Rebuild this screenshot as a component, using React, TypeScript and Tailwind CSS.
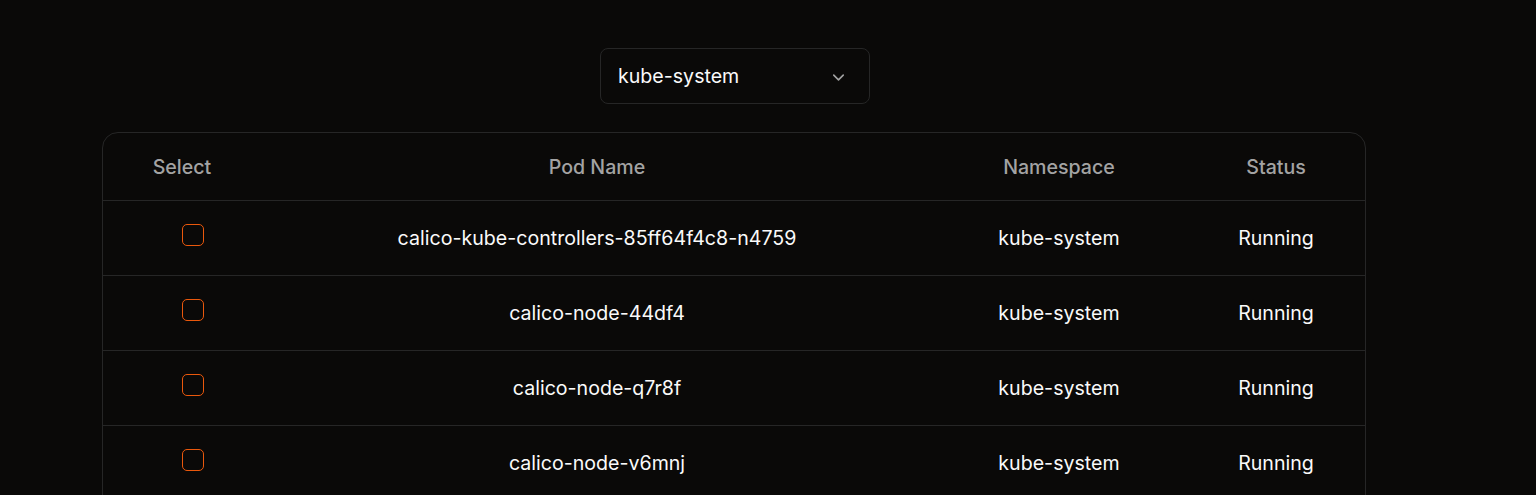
import React, { useState } from 'react';
import { ChevronDown } from 'lucide-react';

interface Pod {
    name: string;
    namespace: string;
    status: string;
}

const pods: Pod[] = [
    { name: 'calico-kube-controllers-85ff64f4c8-n4759', namespace: 'kube-system', status: 'Running' },
    { name: 'calico-node-44df4', namespace: 'kube-system', status: 'Running' },
    { name: 'calico-node-q7r8f', namespace: 'kube-system', status: 'Running' },
    { name: 'calico-node-v6mnj', namespace: 'kube-system', status: 'Running' },
    { name: 'coredns-7db6d8ff4d-8xk2p', namespace: 'kube-system', status: 'Running' },
];

const App: React.FC = () => {
    const [selected, setSelected] = useState<string[]>([]);

    const toggle = (name: string) => {
        setSelected((prev) => (prev.includes(name) ? prev.filter((n) => n !== name) : [...prev, name]));
    };

    return (
        <div className="min-h-screen bg-[#0a0908] font-['Inter',sans-serif] text-[#fafafa]">
            <div className="mr-[68px] flex flex-col items-center pt-12">
                <button className="ml-[2px] flex h-14 w-[270px] items-center justify-between rounded-lg border border-[#262626] bg-[#0a0908] pl-[17px] pr-[21px] pt-[2px] text-[19.6px]">
                    <span>kube-system</span>
                    <ChevronDown className="h-[19px] w-[19px] text-[#a3a3a3]" strokeWidth={2} />
                </button>
                <div className="mt-7 w-[1264px] overflow-hidden rounded-2xl border border-[#262626]">
                    <table className="w-full table-fixed border-collapse text-[19.6px]">
                        <colgroup>
                            <col className="w-[158px]" />
                            <col className="w-[672px]" />
                            <col className="w-[252px]" />
                            <col className="w-[182px]" />
                        </colgroup>
                        <thead>
                            <tr className="h-[67px] border-b border-[#262626] text-[#a3a3a3]">
                                <th className="pt-[2px] font-medium">Select</th>
                                <th className="pt-[2px] font-medium">Pod Name</th>
                                <th className="pt-[2px] font-medium">Namespace</th>
                                <th className="pt-[2px] font-medium">Status</th>
                            </tr>
                        </thead>
                        <tbody>
                            {pods.map((pod) => (
                                <tr key={pod.name} className="h-[75px] border-b border-[#262626]">
                                    <td className="pl-[21px] text-center">
                                        <div className="flex justify-center pb-[6px]">
                                            <input
                                                type="checkbox"
                                                checked={selected.includes(pod.name)}
                                                onChange={() => toggle(pod.name)}
                                                className="h-[22px] w-[22px] appearance-none rounded-[5px] border border-[#ea580c] bg-transparent"
                                            />
                                        </div>
                                    </td>
                                    <td className="pt-[2px] text-center">{pod.name}</td>
                                    <td className="pt-[2px] text-center">{pod.namespace}</td>
                                    <td className="pt-[2px] text-center">{pod.status}</td>
                                </tr>
                            ))}
                        </tbody>
                    </table>
                </div>
            </div>
        </div>
    );
};

export default App;
